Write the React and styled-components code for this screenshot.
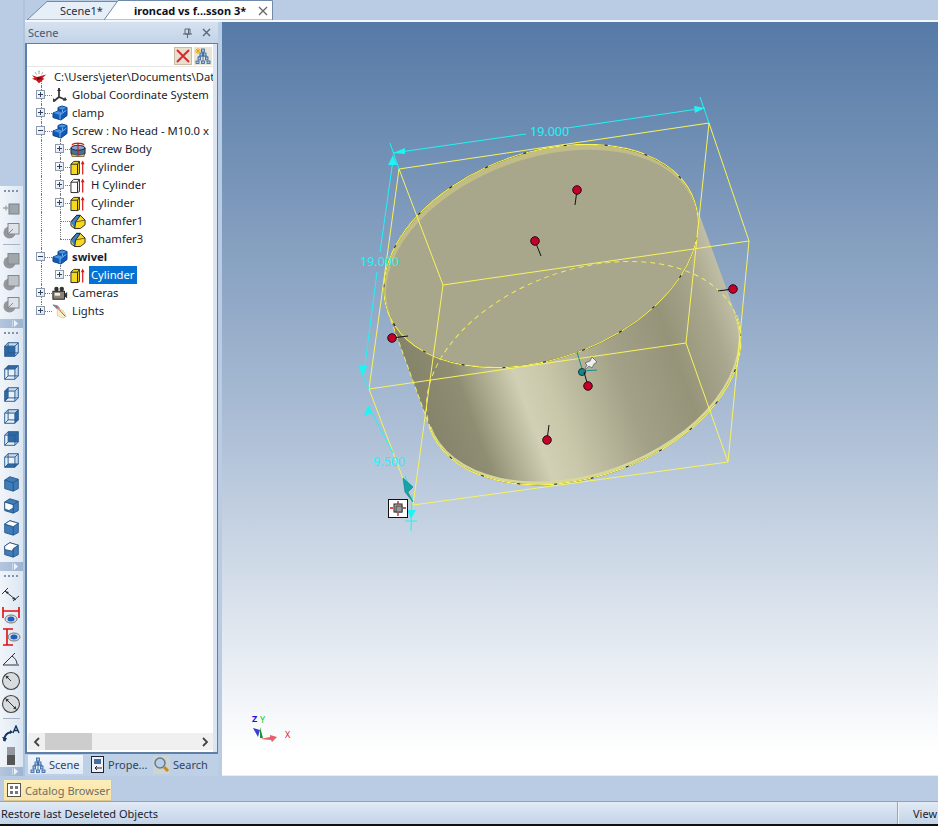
import React from "react";
import styled, { createGlobalStyle } from "styled-components";

const Global = createGlobalStyle`
  html, body { margin: 0; padding: 0; background: #b9cce3; }
  * { box-sizing: border-box; }
`;

const Shell = styled.div`
  width: 938px;
  height: 826px;
  overflow: hidden;
  display: flex;
  flex-direction: column;
  background: #b9cce3;
  font-family: "Noto Sans", "Open Sans", sans-serif;
  font-size: 11px;
  color: #1c1c2c;
`;
const Main = styled.div`
  display: flex;
  height: 776px;
`;

/* left icon rail */
const Rail = styled.div`
  width: 25px;
  padding-top: 186px;
  display: flex;
  flex-direction: column;
  border-right: 2px solid #aec3dc;
`;
const RailGroup = styled.div`
  width: 23px;
  background: linear-gradient(90deg, #f1f5fa, #dbe6f3);
  padding-bottom: ${(p) => p.$pad || 0}px;
`;
const Gripper = styled.div`
  height: 11px;
  margin: 0 3px;
  background: radial-gradient(circle, #7f93ad 1px, transparent 1.2px) 0 3px / 4px 4px repeat-x;
`;
const RailSlot = styled.div`
  height: 22.2px;
  display: flex;
  align-items: center;
  justify-content: center;
  padding-right: 1px;
`;
const RailLine = styled.div`
  height: 1px;
  margin: 3px 3px 4px;
  background: #a9b4c2;
`;
const Overflow = styled.div`
  width: 23px;
  height: 9px;
  padding-right: 4px;
  background: linear-gradient(90deg, #b4c6de, #9db4d1);
  display: flex;
  align-items: center;
  justify-content: flex-end;
`;

/* document column */
const Docs = styled.div`
  flex: 1;
  display: flex;
  flex-direction: column;
`;
const TabStrip = styled.div`
  height: 22px;
  display: flex;
  border-bottom: 2px solid #f3f6fb;
`;
const Tab = styled.div`
  position: relative;
  width: ${(p) => p.$w}px;
  margin-left: ${(p) => p.$ml || 0}px;
  height: 20px;
  padding-left: ${(p) => p.$pl}px;
  display: flex;
  align-items: center;
  white-space: nowrap;
  font-weight: ${(p) => (p.$active ? 700 : 400)};
  color: ${(p) => (p.$active ? "#10101c" : "#2c2c3c")};
`;
const TabShape = styled.svg`
  position: absolute;
  left: 0;
  top: 0;
`;
const TabLabel = styled.span`
  position: relative;
`;
const TabClose = styled.svg`
  position: absolute;
  right: 5px;
  top: 6px;
`;
const Workspace = styled.div`
  flex: 1;
  display: flex;
`;

/* scene panel */
const Panel = styled.div`
  width: 193px;
  display: flex;
  flex-direction: column;
  background: #c5d5e9;
`;
const PanelHead = styled.div`
  height: 21px;
  display: flex;
  align-items: center;
  padding: 0 7px 0 3px;
  gap: 10px;
  color: #47586e;
  background: linear-gradient(#d5e1f0, #c3d4e9);
`;
const PanelTitle = styled.span`
  flex: 1;
`;
const PanelFrame = styled.div`
  flex: 1;
  display: flex;
  flex-direction: column;
  border: 2px solid #5f80a6;
  border-top-width: 1px;
  border-right-width: 1px;
  padding-right: 4px;
  background: #fff;
  background-image: linear-gradient(90deg, #fff 186px, #dbe5f1 186px);
`;
const FindBar = styled.div`
  height: 23px;
  display: flex;
  justify-content: flex-end;
  align-items: center;
  gap: 2px;
  padding: 1px 1px 0 0;
  border-bottom: 1px solid #e6e6e6;
`;
const FindButton = styled.div`
  width: 18px;
  height: 18px;
  display: flex;
  align-items: center;
  justify-content: center;
  background: ${(p) => p.$bg};
  border: 1px solid ${(p) => p.$line};
`;
const Tree = styled.div`
  flex: 1;
  overflow: hidden;
  padding-top: 1px;
  font-size: 11.25px;
`;
const Row = styled.div`
  position: relative;
  height: 18px;
  display: flex;
  align-items: center;
  padding-left: ${(p) => p.$left}px;
  white-space: nowrap;
`;
const Guide = styled.span`
  position: absolute;
  left: ${(p) => p.$x}px;
  top: ${(p) => p.$top || 0}px;
  height: ${(p) => p.$h || 18}px;
  border-left: 1px dotted #777;
`;
const Stub = styled.span`
  position: absolute;
  left: ${(p) => p.$x}px;
  top: 9px;
  width: ${(p) => p.$w}px;
  border-top: 1px dotted #777;
`;
const Expander = styled.span`
  position: absolute;
  left: ${(p) => p.$x}px;
  top: 4px;
  width: 9px;
  height: 9px;
  border: 1px solid #8c9ab0;
  background: linear-gradient(135deg, #fff, #dde4ee);
  &::before {
    content: "";
    position: absolute;
    left: 1px;
    right: 1px;
    top: 3px;
    height: 1px;
    background: #33405a;
  }
  &::after {
    content: "";
    display: ${(p) => (p.$open ? "none" : "block")};
    position: absolute;
    top: 1px;
    bottom: 1px;
    left: 3px;
    width: 1px;
    background: #33405a;
  }
`;
const RowIcon = styled.span`
  position: relative;
  width: 16px;
  height: 18px;
  display: flex;
  align-items: center;
  justify-content: flex-start;
  flex: none;
`;
const RowLabel = styled.span`
  margin-left: ${(p) => p.$gap}px;
  padding: 0 ${(p) => (p.$selected ? 2 : 0)}px;
  line-height: 18px;
  font-weight: ${(p) => (p.$bold ? 700 : 400)};
  color: ${(p) => (p.$selected ? "#fff" : "#1c1c2c")};
  background: ${(p) => (p.$selected ? "#0472d4" : "transparent")};
`;
const HScroll = styled.div`
  height: 17px;
  margin: 0 0 2px 1px;
  background: #f0f0f0;
  display: flex;
  align-items: center;
  justify-content: space-between;
  padding: 0 4px 0 5px;
  position: relative;
`;
const Thumb = styled.div`
  position: absolute;
  left: 17px;
  top: 0;
  bottom: 0;
  width: 47px;
  background: #cdcdcd;
`;
const PanelTabs = styled.div`
  height: 22px;
  padding: 1px 0 0 3px;
  display: flex;
  background: #bdd0e6;
`;
const PanelTab = styled.div`
  width: ${(p) => p.$w}px;
  margin-left: ${(p) => p.$ml || 0}px;
  height: 19px;
  padding-left: 2px;
  display: flex;
  align-items: center;
  gap: 3px;
  white-space: nowrap;
  color: #33445c;
  background: ${(p) => (p.$active ? "linear-gradient(#f2f6fb, #e0eaf5)" : "transparent")};
`;
const Gutter = styled.div`
  width: 4px;
  background: #b9cce3;
`;

/* 3d view */
const Viewport = styled.div`
  flex: 1;
  background: linear-gradient(#567aa6 0%, #a9bcd4 52%, #ffffff 97%);
  border-bottom: 1px solid #e8edf3;
`;
const ViewSvg = styled.svg`
  display: block;
  font-family: "Noto Sans", sans-serif;
`;

/* bottom */
const CatalogBar = styled.div`
  height: 26px;
  padding: 3px 0 0 3px;
  background: #b9cce3;
  border-bottom: 1px solid #8ea3bc;
`;
const CatalogTab = styled.div`
  width: 109px;
  height: 22px;
  padding-left: 3px;
  display: flex;
  align-items: center;
  gap: 4px;
  white-space: nowrap;
  color: #6f6f66;
  background: linear-gradient(#fdeeb9, #fae4a6);
  border: 1px solid #dcc88f;
`;
const StatusBar = styled.div`
  height: 24px;
  display: flex;
  align-items: center;
  justify-content: space-between;
  padding-left: 1px;
  overflow: hidden;
  background: linear-gradient(#e1eaf5, #c3d4e8);
  border-bottom: 2px solid #111;
`;
const StatusRight = styled.div`
  width: 41px;
  height: 100%;
  padding-left: 15px;
  display: flex;
  align-items: center;
  border-left: 1px solid #97a7ba;
  box-shadow: inset 1px 0 0 #eef3f9;
`;

/* ---------- tree icons ---------- */
const BlockIcon = () => (
  <svg width="16" height="16" viewBox="0 0 16 16">
    <path d="M1 8l5-2V2.500L10 1l5 1.500v8L9 15l-8-2.500z" fill="#0f5cb8" stroke="#0a3f85" />
    <path d="M1.500 8l4.500-1.800 4 1.300-2 2.500zM6 3l4-1.500 4.500 1.300-4 2z" fill="#4a94e6" />
    <path d="M8 10v4.500M8 10l6.500-5M10.500 5v2.500" fill="none" stroke="#8dbbf0" strokeWidth=".9" />
  </svg>
);
const FeatureIcon = ({ fill = "#f6d81e" }) => (
  <svg width="17" height="17" viewBox="0 0 17 17">
    <path d="M1 5l3-3h6v13l-2 1H1z" fill={fill} stroke="#222" />
    <path d="M8 5V16M1 5h7l2-3" fill="none" stroke="#222" />
    <path d="M13.500 16V4" stroke="#d81818" strokeWidth="1.300" />
    <path d="M11.500 5l2-4 2 4z" fill="#d81818" />
  </svg>
);
const ChamferIcon = () => (
  <svg width="17" height="17" viewBox="0 0 17 17">
    <path d="M1 9l6-7h4l5 5v5l-5 4H5l-4-3z" fill="#f6d81e" stroke="#222" />
    <path d="M1 9l6-7h4L6 9l-1 7" fill="#3c82cc" stroke="#222" />
    <path d="M6 9l10-2" fill="none" stroke="#222" strokeWidth=".7" />
  </svg>
);
const ScrewIcon = () => (
  <svg width="17" height="17" viewBox="0 0 17 17">
    <ellipse cx="8.500" cy="7" rx="7.500" ry="3" fill="#7fa6cc" stroke="#222" />
    <path d="M1 7v6c2 3 13 3 15 0V7c-2 3-13 3-15 0z" fill="#476f9c" stroke="#222" />
    <path d="M2 13c3 2 10 2 13 0v3H2z" fill="#f6d81e" stroke="#222" strokeWidth=".6" />
    <path d="M2 4c2-3 11-3 13 0M8.500 1v14" fill="none" stroke="#d81818" strokeWidth="1.200" />
  </svg>
);
const AxisIcon = () => (
  <svg width="16" height="16" viewBox="0 0 16 16">
    <path d="M7 1v9l-5 4M7 10l7 3" fill="none" stroke="#333" strokeWidth="1.700" />
    <path d="M5 4l2-3 2 3zM13 10l2 3-4 1zM1 11l0 4 3-1z" fill="#333" />
  </svg>
);
const CameraIcon = () => (
  <svg width="18" height="16" viewBox="0 0 18 16">
    <circle cx="5" cy="3.500" r="2.500" fill="#333" />
    <circle cx="11" cy="3.500" r="2.500" fill="#333" />
    <rect x="1" y="6" width="13" height="9" fill="#8a8478" stroke="#111" />
    <path d="M14 9l3-2v7l-3-2z" fill="#333" />
    <rect x="3" y="8" width="6" height="3" fill="#f4efdc" />
  </svg>
);
const LightIcon = () => (
  <svg width="18" height="17" viewBox="0 0 18 17">
    <path d="M1 1l5 1 3 3-3 1z" fill="#6f9fd8" stroke="#5a6a86" strokeWidth=".7" />
    <path d="M6 4l7 4 3 6-4 2-6-3z" fill="#f7efc6" stroke="#c9c095" strokeWidth=".7" />
    <path d="M4 2l11 12" stroke="#d83030" />
  </svg>
);
const RootIcon = () => (
  <svg width="18" height="15" viewBox="0 0 18 15">
    <path d="M1 5l6 2 3-1 7-2-4 4 2 1-6 5-3-3-5-2 3-1z" fill="#c8161c" />
    <path d="M7 7l5 1-5 3z" fill="#5a0a0e" />
    <path d="M9 0v3M5 2l1 2M13 2l-1 2" stroke="#222" strokeDasharray="1 1" />
  </svg>
);

/* ---------- panel tab / small icons ---------- */
const TreeGlyph = ({ size = 16, star }) => (
  <svg width={size} height={size} viewBox="0 0 16 16">
    <path d="M8 3v3M4 10V8h8v2M8 6v8" stroke="#5b7ba3" fill="none" />
    <g fill="#a9c4e4" stroke="#2e5f9c" strokeWidth=".8">
      <rect x="6.500" y="1" width="3" height="3" />
      <rect x="5" y="5" width="2.500" height="3" />
      <rect x="8.500" y="5" width="2.500" height="3" />
      <rect x="3" y="9" width="2.500" height="3" />
      <rect x="10.500" y="9" width="2.500" height="3" />
      <rect x="1" y="13" width="3" height="2.500" />
      <rect x="6.500" y="13" width="3" height="2.500" />
      <rect x="12" y="13" width="3" height="2.500" />
    </g>
    {star && <path d="M3 0v6M0 3h6M1 1l4 4M5 1L1 5" stroke="#e8a80c" strokeWidth="1" />}
  </svg>
);
const PropsGlyph = () => (
  <svg width="14" height="17" viewBox="0 0 14 17">
    <rect x=".5" y=".5" width="12" height="16" fill="#eef2f7" stroke="#223" />
    <rect x="3" y="3" width="7" height="5" fill="#3f6ea6" />
    <path d="M11 12H4M6 10l-2 2 2 2" fill="none" stroke="#222" />
  </svg>
);
const SearchGlyph = () => (
  <svg width="17" height="18" viewBox="0 0 17 18">
    <rect width="17" height="18" fill="#d8d6c8" opacity=".7" />
    <circle cx="7" cy="7" r="5" fill="#b8cfe8" stroke="#68798e" strokeWidth="1.500" />
    <path d="M11 11l4 4" stroke="#c98a1c" strokeWidth="3" />
  </svg>
);
const CatalogGlyph = () => (
  <svg width="14" height="14" viewBox="0 0 14 14">
    <rect x=".5" y=".5" width="13" height="13" fill="#fff" stroke="#555" />
    <path d="M3 3h3v3H3zM8 3h3v3H8zM3 8h3v3H3zM8 8h3v3H8z" fill="#777" />
  </svg>
);
const Chevron = ({ left }) => (
  <svg width="7" height="10" viewBox="0 0 7 10">
    <path d={left ? "M6 1L2 5l4 4" : "M1 1l4 4-4 4"} fill="none" stroke="#444" strokeWidth="1.800" />
  </svg>
);
const OverflowMark = () => (
  <svg width="7" height="7" viewBox="0 0 7 7">
    <path d="M0 0v7" stroke="#eef3f9" />
    <path d="M2 0l4 3.500-4 3.500z" fill="#eef3f9" />
  </svg>
);

/* ---------- rail icons ---------- */
const GrayIcon = ({ kind }) => (
  <svg width="17" height="17" viewBox="0 0 17 17">
    {kind === "small" ? (
      <>
        <rect x="6" y="4" width="10" height="10" fill="#a1a6ab" stroke="#7b8085" />
        <path d="M0 8h6M3 5.500v5" stroke="#a1a6ab" strokeWidth="1.300" />
      </>
    ) : (
      <>
        <circle cx="6.500" cy="10.500" r="6" fill="#93979b" />
        <rect x="5" y="1.500" width="11" height="10.500" fill={kind === "solid" ? "#a1a6ab" : kind === "half" ? "#bfc3c7" : "#dfe2e6"} stroke="#83888d" />
        {kind === "outline" && <path d="M5 12l5-5" stroke="#83888d" />}
      </>
    )}
  </svg>
);
const wire = "#2a5a8c";
const faces = {
  front: "M2 6h12v12H2z",
  top: "M2 6l4-4h12l-4 4z",
  left: "M2 6l4-4v12l-4 4z",
  right: "M14 6l4-4v12l-4 4z",
  back: "M6 2h12v12H6z",
  bottom: "M2 18l4-4h12l-4 4z",
};
const WireCube = ({ face }) => (
  <svg width="17" height="17" viewBox="0 0 20 20">
    <path d="M2 6h12v12H2zM6 2h12v12H6z" fill="#e8f0f9" />
    <path d="M2 6l4-4h12l-4 4zM14 6l4-4v12l-4 4z" fill="#c6d9ee" />
    <path d={faces[face]} fill="#2f6aa8" />
    <path d="M2 6h12v12H2zM2 6l4-4h12v12l-4 4M14 6l4-4M6 2v12H18M6 14l-4 4" fill="none" stroke={wire} strokeWidth="1.100" />
  </svg>
);
const SolidCube = ({ white }) => (
  <svg width="17" height="17" viewBox="0 0 20 20">
    <path d="M2 6l6-4 10 3v11l-6 3-10-3z" fill="#3f7cba" stroke="#24527f" />
    <path d="M2 6l10 3 6-4M12 9v10" fill="none" stroke="#24527f" />
    {white === "left" && <path d="M2 6l10 3v4l-5 3-5-2z" fill="#fff" stroke="#24527f" />}
    {white === "right" && <path d="M2 6l6-4 10 3-6 4z" fill="#fff" stroke="#24527f" />}
    {white === "top" && <path d="M2 6l6-4 10 3-6 4-1 3-9-2z" fill="#fff" stroke="#24527f" />}
  </svg>
);
const ToolIcon = ({ kind }) => {
  if (kind === "dist")
    return (
      <svg width="20" height="18" viewBox="0 0 20 18">
        <path d="M4 7l11 9M1 10l6-6M12 17l6-5" fill="none" stroke="#333" />
        <path d="M4 7l4 1-2 2zM15 16l-4-1 2-2z" fill="#333" />
      </svg>
    );
  if (kind === "h")
    return (
      <svg width="20" height="18" viewBox="0 0 20 18">
        <path d="M2 1v11M18 1v11M2 5h16" fill="none" stroke="#e01010" strokeWidth="1.600" />
        <ellipse cx="10" cy="13" rx="6" ry="4" fill="#d7dbe0" stroke="#777" />
        <ellipse cx="10" cy="13" rx="3.500" ry="2.500" fill="#1c5fc0" />
      </svg>
    );
  if (kind === "v")
    return (
      <svg width="20" height="20" viewBox="0 0 20 20">
        <path d="M2 2h10M2 18h10M6 2v16" fill="none" stroke="#e01010" strokeWidth="1.600" />
        <ellipse cx="13" cy="10" rx="6" ry="4" fill="#d7dbe0" stroke="#777" />
        <ellipse cx="13" cy="10" rx="3.500" ry="2.500" fill="#1c5fc0" />
      </svg>
    );
  if (kind === "angle")
    return (
      <svg width="20" height="18" viewBox="0 0 20 18">
        <path d="M2 15h16M2 15L14 3" fill="none" stroke="#333" />
        <path d="M11 6c3 2 5 5 5 8" fill="none" stroke="#333" />
      </svg>
    );
  if (kind === "radius" || kind === "diam")
    return (
      <svg width="20" height="20" viewBox="0 0 20 20">
        <circle cx="10" cy="10" r="8.500" fill="#d9dcdf" stroke="#444" strokeWidth="1.100" />
        <path d={kind === "radius" ? "M10 10L5.500 5.500" : "M4.500 4.500l11 11"} stroke="#333" />
        <path d="M4.500 4.500l3.500 1-2.500 2.500z" fill="#333" />
        {kind === "diam" && <path d="M15.500 15.500l-3.500-1 2.500-2.500z" fill="#333" />}
      </svg>
    );
  if (kind === "note")
    return (
      <svg width="20" height="18" viewBox="0 0 20 18">
        <path d="M3 16c0-5 2-8 7-9" fill="none" stroke="#14365c" strokeWidth="1.800" />
        <path d="M1 12l3 5 2-4zM9 5l3 2-3 2z" fill="#14365c" />
        <path d="M12 8l3-7 3 7M13.500 5.500h3" fill="none" stroke="#14365c" strokeWidth="1.400" />
      </svg>
    );
  return (
    <svg width="12" height="18" viewBox="0 0 12 18">
      <path d="M2 1h8M2 3h8M2 5h8M2 7h8" stroke="#444" />
      <rect x="2" y="8" width="8" height="10" fill="#555" />
    </svg>
  );
};

/* ---------- 3d scene ---------- */
const CYAN = "#1ff4f4";
const YELLOW = "#f8f35c";
const pins = [
  [577, 190, 575, 205],
  [535, 241, 541, 256],
  [733, 289, 718, 291],
  [392, 338, 408, 336],
  [588, 386, 584, 372],
  [547, 440, 549, 425],
];
const boxLines = [
  "399,169 709,123 749,241 443,285 399,169",
  "369,389 413,505 728,462 686,343 369,389",
  "399,169 369,389",
  "443,285 413,505",
  "749,241 728,462",
  "709,123 686,343",
];

const Scene = () => (
  <ViewSvg width="716" height="753" viewBox="222 22 716 753">
    <defs>
      <linearGradient id="side" gradientUnits="userSpaceOnUse" x1="-163" y1="0" x2="163" y2="0">
        <stop offset="0" stopColor="#85836a" />
        <stop offset=".13" stopColor="#8f8e73" />
        <stop offset=".3" stopColor="#d1d0b4" />
        <stop offset=".39" stopColor="#c8c7aa" />
        <stop offset=".6" stopColor="#a3a288" />
        <stop offset=".78" stopColor="#959479" />
        <stop offset=".92" stopColor="#a9a88e" />
        <stop offset="1" stopColor="#c0bfa5" />
      </linearGradient>
    </defs>
    <g transform="translate(541 256) rotate(-20)">
      <path d="M-163 0V124.700A163 103 0 0 0 163 124.700V0z" fill="url(#side)" />
      <path d="M-163 124.700A163 103 0 0 0 163 124.700" fill="none" stroke="#d8d79a" strokeWidth="3" transform="translate(0 -2)" />
      <path d="M-163 124.700A163 103 0 0 0 163 124.700" fill="none" stroke="#222" strokeWidth="1" />
      <path d="M-163 124.700A163 103 0 0 0 163 124.700" fill="none" stroke={YELLOW} strokeWidth="1.300" strokeDasharray="34 3" />
      <ellipse rx="163" ry="103" fill="#c2bd84" />
      <ellipse cy="3" rx="162" ry="100" fill="#a9a78b" />
      <ellipse rx="163" ry="103" fill="none" stroke="#222" strokeWidth="1" />
      <ellipse rx="163" ry="103" fill="none" stroke={YELLOW} strokeWidth="1.200" strokeDasharray="38 3" />
      <path d="M-163 124.700A163 103 0 0 1 163 124.700" fill="none" stroke={YELLOW} strokeWidth="1" strokeDasharray="5 4" opacity=".9" />
      <path d="M-163 0V124.700" fill="none" stroke={YELLOW} strokeWidth="1" strokeDasharray="5 3" opacity=".9" />
    </g>

    {boxLines.map((pts) => (
      <polyline key={pts} points={pts} fill="none" stroke={YELLOW} strokeWidth="1" />
    ))}

    <g stroke={CYAN} strokeWidth="1" fill="none">
      <path d="M393 153L526 134M567 128L705 108" />
      <path d="M390 143L399 169M700 97L709 123" />
      <path d="M393 160L380 252M377 272L364 372" />
      <path d="M364 378L369 389M369 407L393 453M405 476L411 490" />
      <path d="M412 495L411 531M405 521H417" />
    </g>
    <g fill={CYAN}>
      <polygon points="393,153 405,148 405,154" />
      <polygon points="705,108 694,106 695,113" />
      <polygon points="393,155 388,165 397,165" />
      <polygon points="363,377 358,365 367,366" />
      <polygon points="368,405 364,416 372,413" />
      <polygon points="411,519 407,510 416,510" />
    </g>
    <g fill={CYAN} fontSize="12.500">
      <text x="530" y="136">19.000</text>
      <text x="360" y="266">19.000</text>
      <text x="373" y="466">9.500</text>
    </g>

    <polygon points="403,478 413,487 408,492 413,502 405,492" fill="#17a3a8" stroke="#0d7f86" strokeWidth=".6" />

    <g stroke="#0f8f92" strokeWidth="1" fill="none">
      <path d="M577 352L583 372M583 371L597 370" />
    </g>
    <circle cx="582" cy="372" r="3.500" fill="#12898e" stroke="#063a3c" />
    <path d="M584 371L587 365 585 363 590 361 592 357 597 362 594 364 592 368 589 366z" fill="#eceff0" stroke="#555" strokeWidth=".7" />

    {pins.map(([x, y, sx, sy]) => (
      <g key={`${x}-${y}`}>
        <path d={`M${x} ${y}L${sx} ${sy}`} stroke="#111" strokeWidth="1" />
        <circle cx={x} cy={y} r="4.300" fill="#c4002a" stroke="#1a0508" strokeWidth=".9" />
      </g>
    ))}

    <rect x="388.500" y="499.500" width="19" height="18" fill="#fff" stroke="#111" />
    <rect x="394" y="504" width="8" height="8" fill="#bbb" stroke="#222" />
    <rect x="396" y="506" width="6" height="6" fill="#999" stroke="#222" strokeWidth=".7" />
    <path d="M398 501v3M398 513v3M390 508h3M403 508h3" stroke="#e01010" strokeWidth="1.300" />

    <path d="M258 737L253 728 260 730z" fill="#3a3fd0" />
    <path d="M260 738L260 727 263 738z" fill="#149a2c" />
    <path d="M260 739L270 737 270 735 277 737 272 742 271 740z" fill="#e4606a" />
    <text x="252" y="722" fontSize="9" fontWeight="700" fill="#1414e0">Z</text>
    <text x="260" y="723" fontSize="9" fill="#12c832">Y</text>
    <text x="285" y="738" fontSize="9" fill="#e01818">X</text>
  </ViewSvg>
);

/* ---------- data ---------- */
const treeRows = [
  { label: "C:\\Users\\jeter\\Documents\\Dat", left: 4, icon: <RootIcon />, gap: 7, guides: [[14, 9, 9]] },
  { label: "Global Coordinate System", left: 25, icon: <AxisIcon />, gap: 4, exp: [9, false], guides: [[14]], stub: [14, 11] },
  { label: "clamp", left: 25, icon: <BlockIcon />, gap: 4, exp: [9, false], guides: [[14]], stub: [14, 11] },
  { label: "Screw : No Head - M10.0 x", left: 25, icon: <BlockIcon />, gap: 4, exp: [9, true], guides: [[14], [33, 9, 9]], stub: [14, 11] },
  { label: "Screw Body", left: 43, icon: <ScrewIcon />, gap: 5, exp: [28, false], guides: [[14], [33]], stub: [33, 10] },
  { label: "Cylinder", left: 43, icon: <FeatureIcon />, gap: 5, exp: [28, false], guides: [[14], [33]], stub: [33, 10] },
  { label: "H Cylinder", left: 43, icon: <FeatureIcon fill="#fff" />, gap: 5, exp: [28, false], guides: [[14], [33]], stub: [33, 10] },
  { label: "Cylinder", left: 43, icon: <FeatureIcon />, gap: 5, exp: [28, false], guides: [[14], [33]], stub: [33, 10] },
  { label: "Chamfer1", left: 43, icon: <ChamferIcon />, gap: 5, guides: [[14], [33]], stub: [33, 10] },
  { label: "Chamfer3", left: 43, icon: <ChamferIcon />, gap: 5, guides: [[14], [33, 0, 9]], stub: [33, 10] },
  { label: "swivel", bold: true, left: 25, icon: <BlockIcon />, gap: 4, exp: [9, true], guides: [[14], [33, 9, 9]], stub: [14, 11] },
  { label: "Cylinder", selected: true, left: 43, icon: <FeatureIcon />, gap: 3, exp: [28, false], guides: [[14], [33, 0, 9]], stub: [33, 10] },
  { label: "Cameras", left: 25, icon: <CameraIcon />, gap: 4, exp: [9, false], guides: [[14]], stub: [14, 11] },
  { label: "Lights", left: 25, icon: <LightIcon />, gap: 4, exp: [9, false], guides: [[14, 0, 9]], stub: [14, 11] },
];

const group1a = ["small", "outline"];
const group1b = ["solid", "half", "outline"];
const group2a = ["front", "top", "left", "right", "back", "bottom"];
const group2b = [null, "left", "right", "top"];
const group3a = ["dist", "h", "v", "angle", "radius", "diam"];
const group3b = ["note", "scale"];

export default function App() {
  return (
    <Shell>
      <Global />
      <Main>
        <Rail>
          <RailGroup $pad={3}>
            <Gripper />
            {group1a.map((k) => (
              <RailSlot key={k}><GrayIcon kind={k} /></RailSlot>
            ))}
            <RailLine />
            {group1b.map((k) => (
              <RailSlot key={k}><GrayIcon kind={k} /></RailSlot>
            ))}
          </RailGroup>
          <Overflow><OverflowMark /></Overflow>
          <RailGroup $pad={1}>
            <Gripper />
            {group2a.map((f) => (
              <RailSlot key={f}><WireCube face={f} /></RailSlot>
            ))}
            {group2b.map((w) => (
              <RailSlot key={String(w)}><SolidCube white={w} /></RailSlot>
            ))}
          </RailGroup>
          <Overflow><OverflowMark /></Overflow>
          <RailGroup>
            <Gripper />
            {group3a.map((k) => (
              <RailSlot key={k}><ToolIcon kind={k} /></RailSlot>
            ))}
            <RailLine />
            {group3b.map((k) => (
              <RailSlot key={k}><ToolIcon kind={k} /></RailSlot>
            ))}
          </RailGroup>
          <Overflow><OverflowMark /></Overflow>
        </Rail>

        <Docs>
          <TabStrip>
            <Tab $w={92} $pl={35}>
              <TabShape width="92" height="20">
                <path d="M2 20L22 1.500H92V20z" fill="#e6eef8" stroke="#6f8aab" />
              </TabShape>
              <TabLabel>Scene1*</TabLabel>
            </Tab>
            <Tab $w={170} $ml={-14} $pl={31} $active>
              <TabShape width="170" height="20">
                <path d="M1 20L15 .500H169.500V20z" fill="#fff" stroke="#6f8aab" />
              </TabShape>
              <TabLabel>ironcad vs f...sson 3*</TabLabel>
              <TabClose width="10" height="10" viewBox="0 0 10 10">
                <path d="M1 1l8 8M9 1l-8 8" stroke="#666" strokeWidth="1.300" />
              </TabClose>
            </Tab>
          </TabStrip>
          <Workspace>
            <Panel>
              <PanelHead>
                <PanelTitle>Scene</PanelTitle>
                <svg width="9" height="10" viewBox="0 0 9 10">
                  <path d="M2 1h5v5H2zM0 6h9M4.500 6v4M5.500 1v5" fill="none" stroke="#5a6675" />
                </svg>
                <svg width="9" height="9" viewBox="0 0 9 9">
                  <path d="M1 1l7 7M8 1L1 8" stroke="#5a6675" strokeWidth="1.400" />
                </svg>
              </PanelHead>
              <PanelFrame>
                <FindBar>
                  <FindButton $bg="#eadfcf" $line="#c9bda9">
                    <svg width="14" height="14" viewBox="0 0 14 14">
                      <path d="M1 1l12 12M13 1L1 13" stroke="#d42c2c" strokeWidth="2" />
                    </svg>
                  </FindButton>
                  <FindButton $bg="#e8e4d8" $line="#e8e4d8">
                    <TreeGlyph star />
                  </FindButton>
                </FindBar>
                <Tree>
                  {treeRows.map((r, i) => (
                    <Row key={i} $left={r.left}>
                      {r.guides.map(([x, top, h]) => (
                        <Guide key={x} $x={x} $top={top} $h={h} />
                      ))}
                      {r.stub && <Stub $x={r.stub[0]} $w={r.stub[1]} />}
                      {r.exp && <Expander $x={r.exp[0]} $open={r.exp[1]} />}
                      <RowIcon>{r.icon}</RowIcon>
                      <RowLabel $gap={r.gap} $bold={r.bold} $selected={r.selected}>{r.label}</RowLabel>
                    </Row>
                  ))}
                </Tree>
                <HScroll>
                  <Chevron left />
                  <Thumb />
                  <Chevron />
                </HScroll>
              </PanelFrame>
              <PanelTabs>
                <PanelTab $w={55} $active><TreeGlyph />Scene</PanelTab>
                <PanelTab $w={62} $ml={6}><PropsGlyph />Prope...</PanelTab>
                <PanelTab $w={60}><SearchGlyph />Search</PanelTab>
              </PanelTabs>
            </Panel>
            <Gutter />
            <Viewport>
              <Scene />
            </Viewport>
          </Workspace>
        </Docs>
      </Main>
      <CatalogBar>
        <CatalogTab><CatalogGlyph />Catalog Browser</CatalogTab>
      </CatalogBar>
      <StatusBar>
        <span>Restore last Deseleted Objects</span>
        <StatusRight>View</StatusRight>
      </StatusBar>
    </Shell>
  );
}
